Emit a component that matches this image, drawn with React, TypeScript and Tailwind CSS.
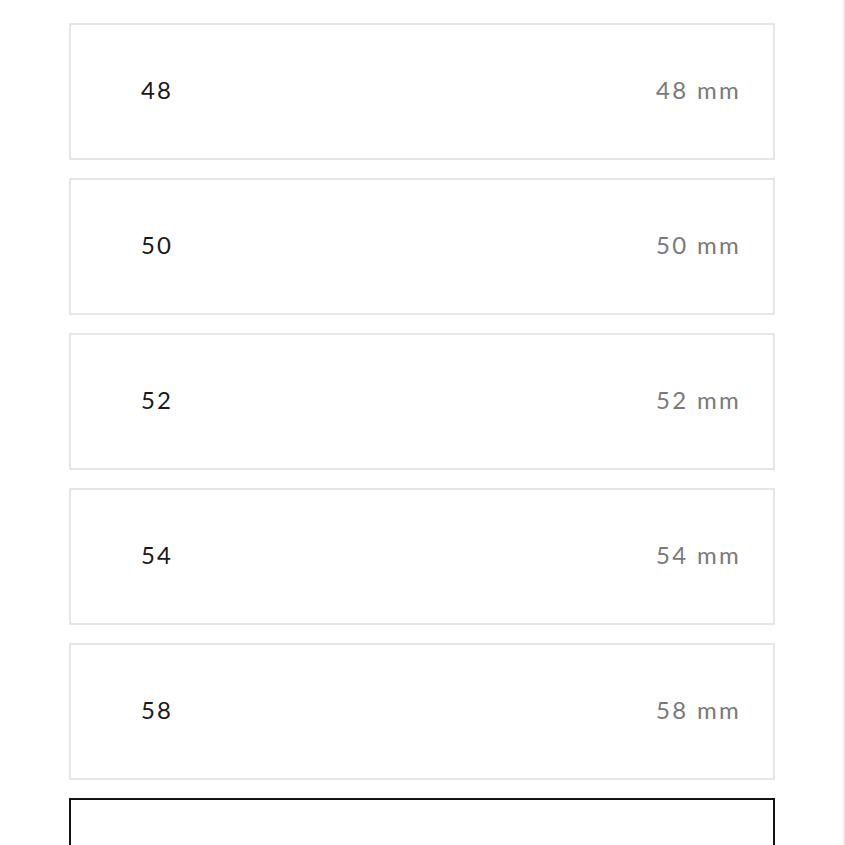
import React from "react";

const sizes = ["48", "50", "52", "54", "58"];

export default function App() {
  return (
    <div className="min-h-screen bg-white border-r-2 border-[#ececec]" style={{ fontFamily: "Lato, 'Open Sans', sans-serif" }}>
      <div className="flex flex-col gap-[18px] pt-[23px] pl-[69px] pr-[68px]">
        {sizes.map((s) => (
          <div
            key={s}
            className="h-[137px] border-2 border-[#e6e6e6] flex items-center justify-between pl-[70px] pr-[32px] pb-1"
          >
            <span className="text-[24px] text-[#1a1a1a] tracking-[2px]">{s}</span>
            <span className="text-[24px] text-[#7a7a7a] tracking-[2.3px]">{s} mm</span>
          </div>
        ))}
        <div className="h-[137px] border-2 border-[#111]" />
      </div>
    </div>
  );
}
